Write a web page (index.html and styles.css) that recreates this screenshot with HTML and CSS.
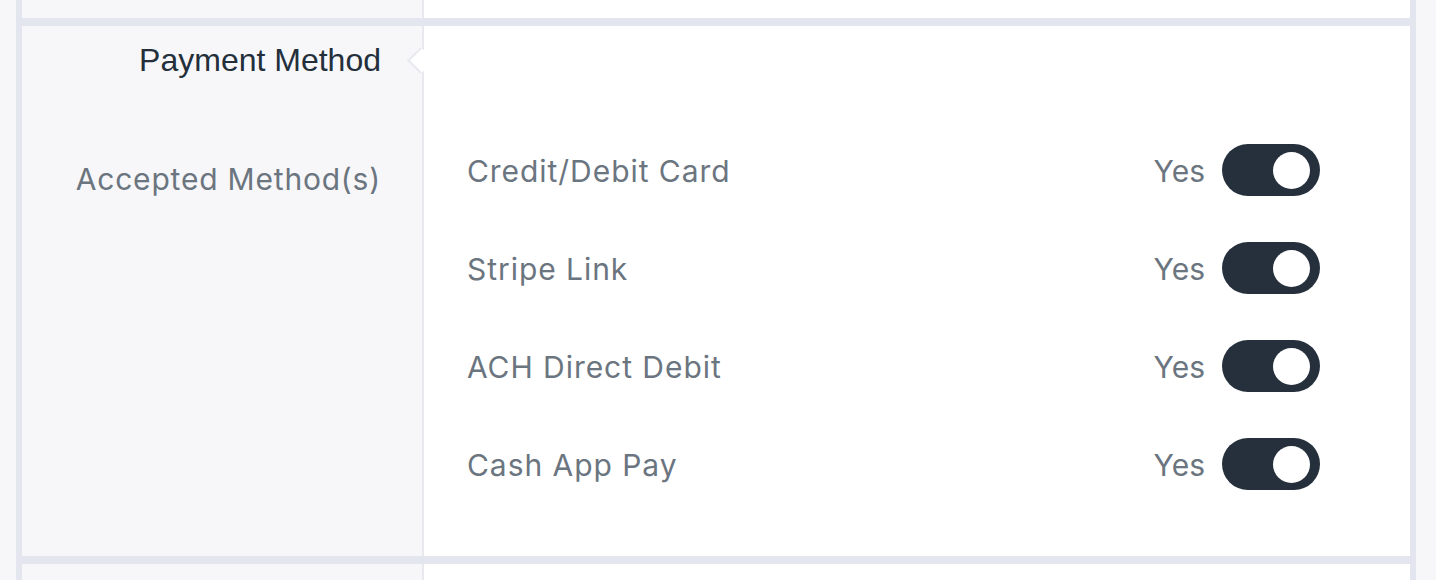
FILE: index.html
```html
<!DOCTYPE html>
<html lang="en">
<head>
<meta charset="utf-8">
<title>Payment Method</title>
<link rel="stylesheet" href="styles.css">
</head>
<body>
<div class="panel">
  <div class="section stub-top">
    <div class="side"></div>
    <div class="body"></div>
  </div>
  <div class="sep"></div>
  <div class="section main">
    <div class="side">
      <h2 class="title">Payment Method</h2>
      <div class="field-label">Accepted Method(s)</div>
    </div>
    <div class="body">
      <span class="notch"></span>
      <ul class="methods">
        <li class="method">
          <span class="method-name">Credit/Debit Card</span>
          <span class="method-state"><span class="yes">Yes</span><span class="toggle on"><span class="knob"></span></span></span>
        </li>
        <li class="method">
          <span class="method-name">Stripe Link</span>
          <span class="method-state"><span class="yes">Yes</span><span class="toggle on"><span class="knob"></span></span></span>
        </li>
        <li class="method">
          <span class="method-name">ACH Direct Debit</span>
          <span class="method-state"><span class="yes">Yes</span><span class="toggle on"><span class="knob"></span></span></span>
        </li>
        <li class="method">
          <span class="method-name">Cash App Pay</span>
          <span class="method-state"><span class="yes">Yes</span><span class="toggle on"><span class="knob"></span></span></span>
        </li>
      </ul>
    </div>
  </div>
  <div class="sep"></div>
  <div class="section stub-bottom">
    <div class="side"></div>
    <div class="body"></div>
  </div>
</div>
</body>
</html>
```

FILE: styles.css
```css
* { box-sizing: border-box; }
html, body { margin: 0; padding: 0; }
body {
  background: #f7f7f9;
  font-family: Inter, "Liberation Sans", Arial, sans-serif;
  height: 580px;
  overflow: hidden;
}
.panel {
  margin-left: 16px;
  width: 1400px;
  border-left: 6px solid #e3e6ee;
  border-right: 6px solid #e3e6ee;
  display: flex;
  flex-direction: column;
  height: 580px;
}
.sep {
  height: 8px;
  background: #e3e6ee;
  flex: none;
}
.section {
  display: grid;
  grid-template-columns: 402px 1fr;
}
.side {
  background: #f7f7f9;
  border-right: 2px solid #e7e9ef;
}
.body {
  background: #ffffff;
  position: relative;
}
.stub-top { height: 18px; flex: none; }
.stub-bottom { flex: 1; }
.main { height: 530px; flex: none; }

.main .side {
  padding: 15px 41px 0 0;
  text-align: right;
}
.title {
  margin: 0;
  font-family: "Liberation Sans", Arial, sans-serif;
  font-weight: 400;
  font-size: 32px;
  line-height: 38px;
  color: #232f3b;
}
.field-label {
  margin-top: 82px;
  font-size: 30px;
  letter-spacing: 0.8px;
  line-height: 36px;
  color: #6b7580;
}

.notch {
  position: absolute;
  left: -13px;
  top: 25px;
  width: 19px;
  height: 19px;
  background: #ffffff;
  border-left: 2px solid #e7e9ef;
  border-bottom: 2px solid #e7e9ef;
  transform: rotate(45deg);
}

.methods {
  list-style: none;
  margin: 0;
  padding: 118px 90px 0 43px;
  display: flex;
  flex-direction: column;
  gap: 46px;
}
.method {
  display: flex;
  align-items: center;
  justify-content: space-between;
  height: 52px;
}
.method-name {
  font-size: 30px;
  letter-spacing: 0.95px;
  color: #6b7580;
  margin-top: 2px;
}
.method-state {
  display: flex;
  align-items: center;
  gap: 17px;
}
.yes {
  font-size: 30px;
  color: #6b7580;
  margin-top: 2px;
}
.toggle {
  width: 98px;
  height: 52px;
  border-radius: 26px;
  background: #25303c;
  display: flex;
  align-items: center;
  justify-content: flex-end;
  padding-right: 10px;
}
.knob {
  width: 37px;
  height: 37px;
  border-radius: 50%;
  background: #ffffff;
}
```
